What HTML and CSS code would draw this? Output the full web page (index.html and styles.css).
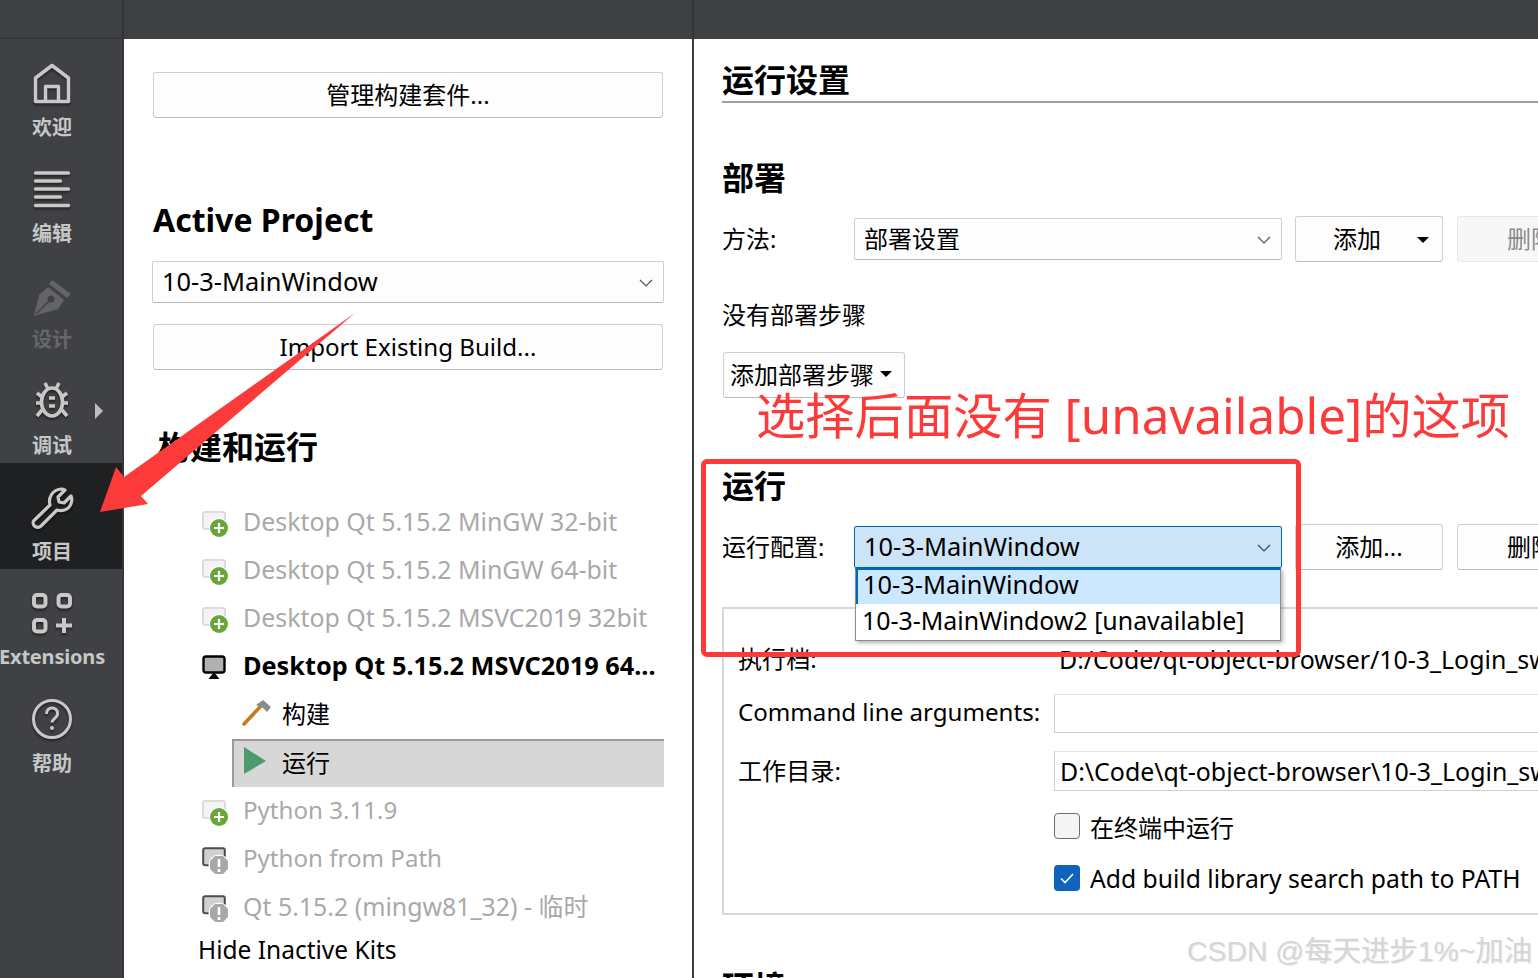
FILE: index.html
```html
<!DOCTYPE html>
<html lang="zh">
<head>
<meta charset="utf-8">
<title>运行设置</title>
<link rel="stylesheet" href="styles.css">
</head>
<body>
<svg class="defs" width="0" height="0">
  <symbol id="kit-add" viewBox="0 0 36 36">
    <rect x="1" y="1" width="22" height="17" rx="2" fill="#f4f4f4" stroke="#dcdcdc" stroke-width="2"/>
    <circle cx="17" cy="17" r="10" fill="#fff"/>
    <circle cx="17" cy="17" r="9" fill="#6aa63a"/>
    <path d="M17 12v10M12 17h10" stroke="#fff" stroke-width="2.2" fill="none"/>
  </symbol>
  <symbol id="kit-warn" viewBox="0 0 36 36">
    <rect x="1.2" y="1.2" width="21.6" height="17" rx="2" fill="#d0d0d0" stroke="#4c4c4c" stroke-width="2"/>
    <circle cx="17" cy="18" r="10.500" fill="#fff"/>
    <path d="M13 9h8l5 5v8l-5 5h-8l-5-5v-8z" fill="#a8a8a8"/>
    <path d="M17 12v8M17 22v3" stroke="#fff" stroke-width="2.600" fill="none"/>
  </symbol>
</svg>

<div class="topbar"><span class="tb-a"></span><span class="tb-b"></span></div>

<div class="main">
  <nav class="sidebar">
    <div class="nav-item">
      <svg class="nav-icon" viewBox="0 0 44 44"><path d="M5.500 38.500V15L22 2.500 38.500 15v23.500zM15.500 38V23.500h13V38" fill="none" stroke="#c8c8c8" stroke-width="3.500" stroke-linejoin="round"/></svg>
      <span class="nav-label">欢迎</span>
    </div>
    <div class="nav-item">
      <svg class="nav-icon" viewBox="0 0 44 44"><path d="M5.500 4h33M5.500 12h25M5.500 20h33M5.500 28h25M5.500 36.500h33" fill="none" stroke="#c8c8c8" stroke-width="3.400" stroke-linecap="round"/></svg>
      <span class="nav-label">编辑</span>
    </div>
    <div class="nav-item dim">
      <svg class="nav-icon" viewBox="0 0 44 44"><path d="M4 41l5-21 9-8 16 13-6 9z" fill="#636467"/><path d="M19 9l3-4 19 14-4 4z" fill="#636467"/><circle cx="21" cy="24" r="3.500" fill="#404144"/><path d="M6 39l13-13" stroke="#404144" stroke-width="1.500"/></svg>
      <span class="nav-label">设计</span>
    </div>
    <div class="nav-item">
      <svg class="nav-icon" viewBox="0 0 44 44"><g fill="none" stroke="#c8c8c8" stroke-width="3.600" stroke-linecap="butt"><ellipse cx="22" cy="21" rx="10.500" ry="14"/><path d="M15 2l3 6M29 2l-3 6M7 12l5 4M37 12l-5 4M6 22h6M38 22h-6M7 35l5-6M37 35l-5-6M19 17h6M19 25h6"/></g></svg>
      <span class="nav-label">调试</span>
      <span class="nav-arrow"></span>
    </div>
    <div class="nav-item active">
      <svg class="nav-icon" viewBox="0 0 44 44"><path d="M4 33.500L20 18c-2-7 2-15 11-16 2 0 3 .3 4 1l-7 7 1 5 5 1 7-7c1 2 1 4 .5 6-1.500 7-8 10-14.500 8L11 39c-2 2-5 1.500-6.500 0S2.500 35 4 33.500z" fill="none" stroke="#c8c8c8" stroke-width="3.200" stroke-linejoin="round"/></svg>
      <span class="nav-label">项目</span>
    </div>
    <div class="nav-item">
      <svg class="nav-icon" viewBox="0 0 44 44"><g fill="none" stroke="#c8c8c8" stroke-width="4"><rect x="4" y="2" width="11.500" height="11.500" rx="3"/><rect x="28.500" y="2" width="11.500" height="11.500" rx="3"/><rect x="4" y="27" width="11.500" height="11.500" rx="3"/><path d="M26 32.500h16M34 25v15"/></g></svg>
      <span class="nav-label ext">Extensions</span>
    </div>
    <div class="nav-item">
      <svg class="nav-icon" viewBox="0 0 44 44"><circle cx="22" cy="20" r="18.500" fill="none" stroke="#c8c8c8" stroke-width="3"/><path d="M16.500 15c0-4 2.500-6 5.500-6s5.500 2 5.500 5.500c0 5-5.500 5-5.500 9" fill="none" stroke="#c8c8c8" stroke-width="3"/><circle cx="22" cy="29" r="2" fill="#c8c8c8"/></svg>
      <span class="nav-label">帮助</span>
    </div>
  </nav>

  <section class="left">
    <div class="btn wide mt-33 cjk">管理构建套件...</div>
    <h2 class="title mt-82">Active Project</h2>
    <div class="combo project">10-3-MainWindow<svg class="chev" viewBox="0 0 14 8"><path d="M1 1l6 6 6-6" fill="none" stroke="#555" stroke-width="1.200"/></svg></div>
    <div class="btn wide mt-21 narrow">Import Existing Build...</div>
    <h2 class="title kits-title">构建和运行</h2>
    <ul class="kits">
      <li class="kit off"><svg class="kit-icon"><use href="#kit-add"/></svg>Desktop Qt 5.15.2 MinGW 32-bit</li>
      <li class="kit off"><svg class="kit-icon"><use href="#kit-add"/></svg>Desktop Qt 5.15.2 MinGW 64-bit</li>
      <li class="kit off"><svg class="kit-icon"><use href="#kit-add"/></svg>Desktop Qt 5.15.2 MSVC2019 32bit</li>
      <li class="kit cur"><svg class="kit-icon" viewBox="0 0 36 36"><rect x="1.500" y="1.500" width="21" height="16" rx="2.500" fill="#b0b0b0" stroke="#000" stroke-width="2.400"/><path d="M12 17l5.500 7h-11z" fill="#000"/></svg>Desktop Qt 5.15.2 MSVC2019 64...</li>
      <li class="sub cjk"><svg class="sub-icon" viewBox="0 0 30 30"><path d="M2 26L18 9" stroke="#c97a20" stroke-width="3.600" stroke-linecap="round"/><path d="M14 7l7-5 8 7-4 5-4-4z" fill="#8b8b8b"/></svg>构建</li>
      <li class="sub sel cjk"><svg class="sub-icon" viewBox="0 0 30 30"><path d="M2 1l22 14L2 28z" fill="#4d9a6c"/></svg>运行</li>
      <li class="kit off narrow"><svg class="kit-icon"><use href="#kit-add"/></svg>Python 3.11.9</li>
      <li class="kit off narrow"><svg class="kit-icon"><use href="#kit-warn"/></svg>Python from Path</li>
      <li class="kit off"><svg class="kit-icon"><use href="#kit-warn"/></svg>Qt 5.15.2 (mingw81_32) - 临时</li>
    </ul>
    <div class="hide">Hide Inactive Kits</div>
  </section>

  <div class="divider"></div>

  <section class="right">
    <h1 class="r-title">运行设置</h1>
    <h2 class="title mt-56">部署</h2>
    <div class="row mt-17">
      <span class="r-label cjk">方法:</span>
      <div class="combo cfg cjk">部署设置<svg class="chev" viewBox="0 0 14 8"><path d="M1 1l6 6 6-6" fill="none" stroke="#555" stroke-width="1.200"/></svg></div>
      <div class="btn r-btn cjk has-caret">添加<span class="caret"></span></div>
      <div class="btn r-btn disabled cjk">删除</div>
    </div>
    <div class="plain mt-38 cjk">没有部署步骤</div>
    <div class="btn step cjk">添加部署步骤<span class="caret small"></span></div>
    <h2 class="title mt-69">运行</h2>
    <div class="row mt-17">
      <span class="r-label cjk">运行配置:</span>
      <div class="combo cfg focus">10-3-MainWindow<svg class="chev" viewBox="0 0 14 8"><path d="M1 1l6 6 6-6" fill="none" stroke="#444" stroke-width="1.200"/></svg></div>
      <div class="btn r-btn cjk">添加...</div>
      <div class="btn r-btn cjk">删除</div>
    </div>
    <div class="group">
      <div class="g-row r1"><span class="g-label">执行档:</span><span class="g-value">D:/Code/qt-object-browser/10-3_Login_sw/debug/10-3-MainWindow.exe</span></div>
      <div class="g-row r2"><span class="g-label">Command line arguments:</span><div class="input"></div></div>
      <div class="g-row r3"><span class="g-label">工作目录:</span><div class="input">D:\Code\qt-object-browser\10-3_Login_sw\debug</div></div>
      <div class="g-row r4 cjk"><span class="g-label"></span><span class="check"></span>在终端中运行</div>
      <div class="g-row r5"><span class="g-label"></span><span class="check on"><svg viewBox="0 0 26 26"><path d="M7 13.500l4 4 8-8.500" fill="none" stroke="#fff" stroke-width="1.600"/></svg></span>Add build library search path to PATH</div>
    </div>
    <h2 class="title env">环境</h2>
  </section>
</div>

<div class="popup">
  <div class="pop-item cur-item">10-3-MainWindow</div>
  <div class="pop-item">10-3-MainWindow2 [unavailable]</div>
</div>
<div class="red-box"></div>
<div class="red-text">选择后面没有 [unavailable]的这项</div>
<svg class="arrow" viewBox="0 0 1538 978"><polygon points="100,512 116,467 124,477 355,313 141,496 148,504" fill="#fc3a3a"/></svg>
<div class="mark">CSDN @每天进步1%~加油</div>
</body>
</html>
```
FILE: styles.css
```css
* { box-sizing: border-box; margin: 0; padding: 0; }
html, body { width: 1538px; height: 978px; overflow: hidden; }
body {
  background: #fff;
  color: #000;
  font-family: "Noto Sans", "Noto Sans CJK SC", sans-serif;
  font-size: 24.9px;
  position: relative;
  display: flex;
  flex-direction: column;
}
.defs { position: absolute; }
.cjk { font-size: 24px; }
.narrow { font-size: 24.1px; }

.topbar {
  height: 39px;
  flex: none;
  background: #3f4043;
  display: flex;
}
.tb-a { width: 124px; height: 39px; border-right: 2px solid #333436; border-bottom: 2px solid #353638; }
.tb-b { width: 570px; height: 39px; border-right: 2px solid #333436; }

.main { flex: 1; display: flex; min-height: 0; }

.sidebar {
  width: 124px;
  flex: none;
  background: #404144;
  border-right: 2px solid #36373a;
  display: flex;
  flex-direction: column;
}
.nav-item {
  height: 106px;
  position: relative;
  display: flex;
  flex-direction: column;
  align-items: center;
  padding: 24px 18px 0 0;
  flex: none;
}
.nav-item.active { background: #1f2021; }
.nav-icon { width: 44px; height: 44px; flex: none; filter: drop-shadow(0 2px 1px rgba(0,0,0,.45)); }
.nav-label {
  font-size: 20px;
  font-weight: 700;
  line-height: 30px;
  margin-top: 6px;
  color: #c6c8c8;
  white-space: nowrap;
}
.nav-label.ext { letter-spacing: -0.2px; margin-top: 5px; }
.dim .nav-label { color: #66676a; }
.dim .nav-icon { filter: none; }
.nav-arrow {
  position: absolute;
  left: 95px;
  top: 46px;
  border-left: 8px solid #bdbdbd;
  border-top: 8px solid transparent;
  border-bottom: 8px solid transparent;
}

.left {
  width: 568px;
  flex: none;
  padding-left: 29px;
  display: flex;
  flex-direction: column;
  align-items: flex-start;
}
.divider { width: 2px; flex: none; background: #3a3b3d; }
.right {
  flex: 1;
  min-width: 0;
  padding-left: 28px;
  overflow: hidden;
  display: flex;
  flex-direction: column;
  align-items: flex-start;
}

.btn {
  height: 46px;
  border: 1px solid #d0d0d0;
  border-bottom-color: #bcbcbc;
  border-radius: 3px;
  background: #fdfdfd;
  display: flex;
  align-items: center;
  justify-content: center;
  position: relative;
  white-space: nowrap;
  flex: none;
  padding-bottom: 3px;
}
.btn.narrow { padding-bottom: 1px; }
.wide { width: 510px; }
.mt-33 { margin-top: 33px; }
.mt-82 { margin-top: 82px; }
.mt-21 { margin-top: 21px; }
.mt-56 { margin-top: 56px; }
.mt-17 { margin-top: 17px; }
.mt-38 { margin-top: 38px; }
.mt-69 { margin-top: 69px; }

.title { font-size: 32px; font-weight: 700; line-height: 38px; height: 40px; white-space: nowrap; flex: none; }
.left .title { line-height: 40px; }
.kits-title { margin-top: 57px; margin-left: 5px; }
.env { margin-top: 53px; }

.combo {
  height: 42px;
  background: #fdfdfd;
  border: 1px solid #d0d0d0;
  border-bottom-color: #bcbcbc;
  border-radius: 2px;
  display: flex;
  align-items: center;
  padding: 0 0 3px 9px;
  position: relative;
  white-space: nowrap;
  flex: none;
  font-size: 25.4px;
}
.combo.cjk { font-size: 24px; }
.chev { position: absolute; right: 10px; top: 17px; width: 14px; height: 8px; }
.project { width: 512px; margin-top: 21px; margin-left: -1px; }

.kits { list-style: none; margin-top: 31px; margin-left: 49px; width: 462px; flex: none; }
.kit, .sub { height: 48px; display: flex; align-items: center; white-space: nowrap; padding-bottom: 2px; }
.kit-icon { width: 36px; height: 36px; margin-right: 5px; margin-top: 13px; align-self: flex-start; flex: none; overflow: visible; }
.off { color: #a9a9a9; }
.cur { font-weight: 700; font-size: 25.3px; }
.sub { margin-left: 30px; padding: 0 0 3px 10px; width: 432px; }
.sub-icon { width: 30px; height: 30px; margin-right: 10px; flex: none; }
.sel {
  margin-top: 1px;
  background: #d7d7d7;
  border-top: 2px solid #9b9b9b;
  border-left: 2px solid #9b9b9b;
  padding: 0 0 6px 8px;
}
.sel + .kit { height: 47px; }
.hide { margin-left: 45px; height: 40px; line-height: 40px; white-space: nowrap; font-size: 24.5px; }

.r-title {
  font-size: 32px;
  font-weight: 700;
  line-height: 38px;
  height: 42px;
  width: 830px;
  margin-top: 22px;
  border-bottom: 2px solid #a0a0a0;
  flex: none;
}
.row { display: flex; align-items: center; height: 46px; flex: none; }
.r-label { width: 132px; flex: none; white-space: nowrap; padding-bottom: 3px; }
.cfg { width: 428px; }
.cfg.focus { background: #cce4f7; border-color: #0067c0; border-bottom-color: #0067c0; }
.r-btn { width: 148px; margin-left: 13px; }
.r-btn + .r-btn { margin-left: 14px; }
.has-caret { padding-right: 24px; }
.disabled { color: #8a8a8a; background: #f7f7f7; border-color: #e8e8e8; }
.caret {
  position: absolute;
  right: 13px;
  top: 20px;
  border-top: 6px solid #000;
  border-left: 6px solid transparent;
  border-right: 6px solid transparent;
}
.caret.small { position: static; margin-left: 6px; }
.plain { height: 32px; line-height: 30px; flex: none; }
.step { width: 182px; margin-top: 20px; margin-left: 1px; justify-content: flex-start; padding-left: 6px; }

.group {
  margin-top: 37px;
  width: 860px;
  height: 308px;
  border: 2px solid #d8d8d8;
  padding: 28px 0 0 14px;
  flex: none;
}
.g-row { display: flex; align-items: center; white-space: nowrap; }
.g-label { width: 316px; flex: none; font-size: 24.1px; padding-bottom: 4px; }
.g-value { padding-left: 5px; }
.r1 { height: 44px; }
.r2 { height: 39px; margin-top: 13px; }
.r3 { height: 40px; margin-top: 18px; }
.r4 { height: 40px; margin-top: 15px; }
.r5 { height: 40px; margin-top: 12px; font-size: 24.7px; }
.input {
  width: 520px;
  height: 100%;
  border: 1px solid #d0d0d0;
  border-top-color: #e4e4e4;
  border-right: 0;
  padding-left: 5px;
  display: flex;
  align-items: center;
  overflow: hidden;
}
.check {
  width: 26px;
  height: 26px;
  border: 1.500px solid #6e6e6e;
  border-radius: 4px;
  background: #f4f4f4;
  margin-right: 10px;
  flex: none;
}
.check.on { background: #0f62be; border: 0; }
.check svg { display: block; width: 26px; height: 26px; }

.popup {
  position: absolute;
  left: 855px;
  top: 568px;
  width: 426px;
  height: 73px;
  background: #fff;
  border: 1px solid #8d8d8d;
  border-top: 2px solid #0067c0;
  box-shadow: 2px 2px 4px rgba(0,0,0,.3);
}
.pop-item { height: 36px; line-height: 32px; padding-left: 6px; white-space: nowrap; }
.cur-item { background: #cce8ff; height: 34px; line-height: 28px; border-left: 2px solid #0067c0; padding-left: 5px; font-size: 25.4px; }
.red-box {
  position: absolute;
  left: 701px;
  top: 459px;
  width: 600px;
  height: 198px;
  border: 5px solid #fc3a3a;
  border-radius: 6px;
}
.red-text {
  position: absolute;
  left: 756px;
  top: 381px;
  font-size: 49.3px;
  line-height: 68px;
  color: #fc3a3a;
  white-space: nowrap;
}
.arrow { position: absolute; left: 0; top: 0; width: 1538px; height: 978px; pointer-events: none; }
.mark {
  position: absolute;
  left: 1187px;
  top: 932px;
  font-family: "Liberation Sans", "Noto Sans CJK SC", sans-serif;
  font-size: 28.4px;
  line-height: 38px;
  color: #d6d6d6;
  text-shadow: 1px 1px 1px #e8e8e8;
  white-space: nowrap;
}
```
